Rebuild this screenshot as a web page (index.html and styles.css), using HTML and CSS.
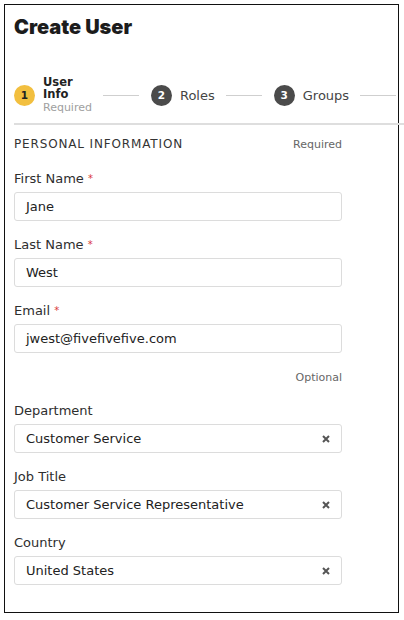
FILE: index.html
```html
<!DOCTYPE html>
<html>
<head>
<meta charset="utf-8">
<link rel="stylesheet" href="styles.css">
</head>
<body>
<div class="frame">
  <h1 class="title">Create User</h1>
  <div class="stepper">
    <span class="dot dot-active">1</span>
    <div class="step-text">
      <div class="step-name">User</div>
      <div class="step-name">Info</div>
      <div class="step-sub">Required</div>
    </div>
    <span class="line"></span>
    <span class="dot">2</span>
    <span class="step-label">Roles</span>
    <span class="line"></span>
    <span class="dot">3</span>
    <span class="step-label">Groups</span>
    <span class="line line-last"></span>
  </div>
  <div class="divider"></div>
  <div class="form">
    <div class="section-head">
      <span class="section-title">PERSONAL INFORMATION</span>
      <span class="hint">Required</span>
    </div>
    <div class="field">
      <div class="label">First Name <span class="req">*</span></div>
      <div class="input">Jane</div>
    </div>
    <div class="field">
      <div class="label">Last Name <span class="req">*</span></div>
      <div class="input">West</div>
    </div>
    <div class="field">
      <div class="label">Email <span class="req">*</span></div>
      <div class="input">jwest@fivefivefive.com</div>
    </div>
    <div class="optional-row"><span class="hint">Optional</span></div>
    <div class="field field-after-hint">
      <div class="label">Department</div>
      <div class="input">Customer Service<svg class="clear" viewBox="0 0 10 10"><path d="M2 2L8 8M8 2L2 8"/></svg></div>
    </div>
    <div class="field">
      <div class="label">Job Title</div>
      <div class="input">Customer Service Representative<svg class="clear" viewBox="0 0 10 10"><path d="M2 2L8 8M8 2L2 8"/></svg></div>
    </div>
    <div class="field">
      <div class="label">Country</div>
      <div class="input">United States<svg class="clear" viewBox="0 0 10 10"><path d="M2 2L8 8M8 2L2 8"/></svg></div>
    </div>
  </div>
</div>
</body>
</html>
```

FILE: styles.css
```css
* { box-sizing: border-box; }
html, body { margin: 0; padding: 0; background: #fff; }
body {
  font-family: "DejaVu Sans", "Liberation Sans", sans-serif;
  color: #333;
  overflow: hidden;
}
.frame {
  margin: 4px 0 0 4px;
  width: 395px;
  height: 609px;
  border: 1.5px solid #111;
  padding: 10px 0 0 9px;
  box-shadow: 0 2px 0 #d4d4d4;
}
.title {
  margin: 0;
  font-family: Inter, "Liberation Sans", sans-serif;
  font-weight: 900;
  font-size: 20px;
  line-height: 24px;
  letter-spacing: 0;
  color: #1c1c1c;
}
.stepper {
  display: flex;
  align-items: center;
  margin-top: 36px;
  height: 40px;
}
.dot {
  width: 21px;
  height: 21px;
  border-radius: 50%;
  background: #4b4b4b;
  color: #fff;
  font-size: 10.5px;
  font-weight: 700;
  display: flex;
  align-items: center;
  justify-content: center;
  flex: none;
}
.dot-active { background: #f2bf3f; color: #222; }
.step-text { margin-left: 8px; }
.step-name {
  font-size: 11.5px;
  font-weight: 700;
  line-height: 12.5px;
  color: #222;
}
.step-sub {
  font-size: 11px;
  line-height: 14px;
  color: #a0a0a0;
}
.line {
  width: 36px;
  height: 1px;
  background: #cfcfcf;
  margin: 0 12px 0 11px;
  flex: none;
}
.line-last { margin-right: 0; }
.step-label {
  margin-left: 8px;
  font-size: 13px;
  color: #454545;
}
.divider {
  height: 2px;
  background: #dedede;
  margin-top: 8px;
  margin-right: -10px;
}
.form { width: 328px; }
.section-head {
  display: flex;
  justify-content: space-between;
  align-items: center;
  margin-top: 11px;
  height: 16px;
}
.section-title {
  font-size: 12px;
  letter-spacing: 0.85px;
  color: #333;
}
.hint {
  font-size: 11px;
  color: #666;
}
.field { margin-top: 19px; }
.field + .field { margin-top: 16px; }
.field-after-hint { margin-top: 18px; }
.label {
  font-size: 13px;
  line-height: 16px;
  color: #2e2e2e;
  margin-bottom: 5px;
}
.req { color: #d9383a; font-size: 10px; vertical-align: top; }
.input {
  height: 29px;
  border: 1px solid #dcdcdc;
  border-radius: 3px;
  padding: 0 11px;
  display: flex;
  align-items: center;
  justify-content: space-between;
  font-size: 13px;
  color: #222;
}
.clear {
  width: 10px;
  height: 10px;
  margin-right: -1px;
  stroke: #555;
  stroke-width: 2;
  fill: none;
}
.optional-row {
  display: flex;
  justify-content: flex-end;
  margin-top: 16px;
  height: 16px;
  align-items: center;
}
```
